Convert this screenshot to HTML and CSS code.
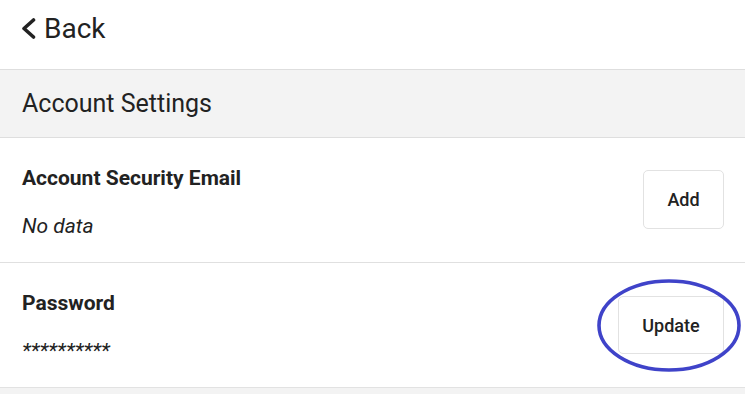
FILE: index.html
```html
<!DOCTYPE html>
<html>
<head>
<meta charset="utf-8">
<link rel="stylesheet" href="styles.css">
</head>
<body>
<div class="page">
  <header class="top">
    <a class="back">
      <svg class="chev" width="15" height="21" viewBox="0 0 15 21"><path d="M12.5 2 L3 10.5 L12.5 19" fill="none" stroke="#222" stroke-width="3.6" stroke-linecap="round" stroke-linejoin="round"/></svg>
      <span>Back</span>
    </a>
  </header>
  <div class="section-title">Account Settings</div>
  <div class="row">
    <div class="info">
      <div class="label">Account Security Email</div>
      <div class="value italic">No data</div>
    </div>
    <button class="btn btn-add">Add</button>
  </div>
  <div class="row row-pw">
    <div class="info">
      <div class="label">Password</div>
      <div class="value stars">**********</div>
    </div>
    <div class="btn-wrap">
      <button class="btn btn-update">Update</button>
      <svg class="circle" width="150" height="98" viewBox="0 0 150 98"><ellipse cx="74" cy="48.5" rx="70" ry="44.5" fill="none" stroke="#3f43c9" stroke-width="3.6"/></svg>
    </div>
  </div>
  <div class="footer"></div>
</div>
</body>
</html>
```
FILE: styles.css
```css
html, body {
  margin: 0;
  padding: 0;
  background: #fff;
}
body {
  font-family: Roboto, "Noto Sans", sans-serif;
  color: #222;
}
.page {
  width: 745px;
  height: 394px;
  overflow: hidden;
  display: flex;
  flex-direction: column;
}
.top {
  height: 70px;
  box-sizing: border-box;
  display: flex;
  align-items: flex-start;
  padding-left: 21px;
  padding-top: 13px;
  border-bottom: 1px solid #dedede;
}
.back {
  display: flex;
  align-items: center;
  gap: 8px;
  font-size: 28px;
  line-height: 32px;
  color: #222;
}
.chev {
  display: block;
  margin-top: -1px;
}
.section-title {
  height: 68px;
  box-sizing: border-box;
  background: #f3f3f3;
  border-bottom: 1px solid #dedede;
  display: flex;
  align-items: center;
  padding-left: 22px;
  font-size: 25px;
  color: #222;
}
.row {
  height: 125px;
  box-sizing: border-box;
  border-bottom: 1px solid #e0e0e0;
  display: flex;
  align-items: center;
  justify-content: space-between;
  padding-left: 22px;
  padding-right: 21px;
}
.info {
  display: flex;
  flex-direction: column;
  gap: 24px;
  margin-top: 4px;
}
.label {
  font-size: 21px;
  font-weight: 700;
  line-height: 24px;
}
.value {
  font-size: 21px;
  line-height: 24px;
}
.italic {
  font-style: italic;
}
.stars {
  font-style: italic;
}
.btn {
  font-family: Roboto, "Noto Sans", sans-serif;
  font-size: 18px;
  font-weight: 500;
  color: #222;
  background: #fff;
  border: 1px solid #e2e2e2;
  border-radius: 5px;
  cursor: pointer;
  padding: 0;
}
.btn-add {
  width: 81px;
  height: 59px;
  margin-top: -2px;
}
.row-pw {
  border-bottom: 1px solid #e2e2e2;
}
.btn-wrap {
  position: relative;
}
.btn-update {
  width: 106px;
  height: 58px;
  display: block;
}
.circle {
  position: absolute;
  left: -23px;
  top: -19px;
  pointer-events: none;
}
.footer {
  flex: 1;
  background: #f3f3f3;
}
```
